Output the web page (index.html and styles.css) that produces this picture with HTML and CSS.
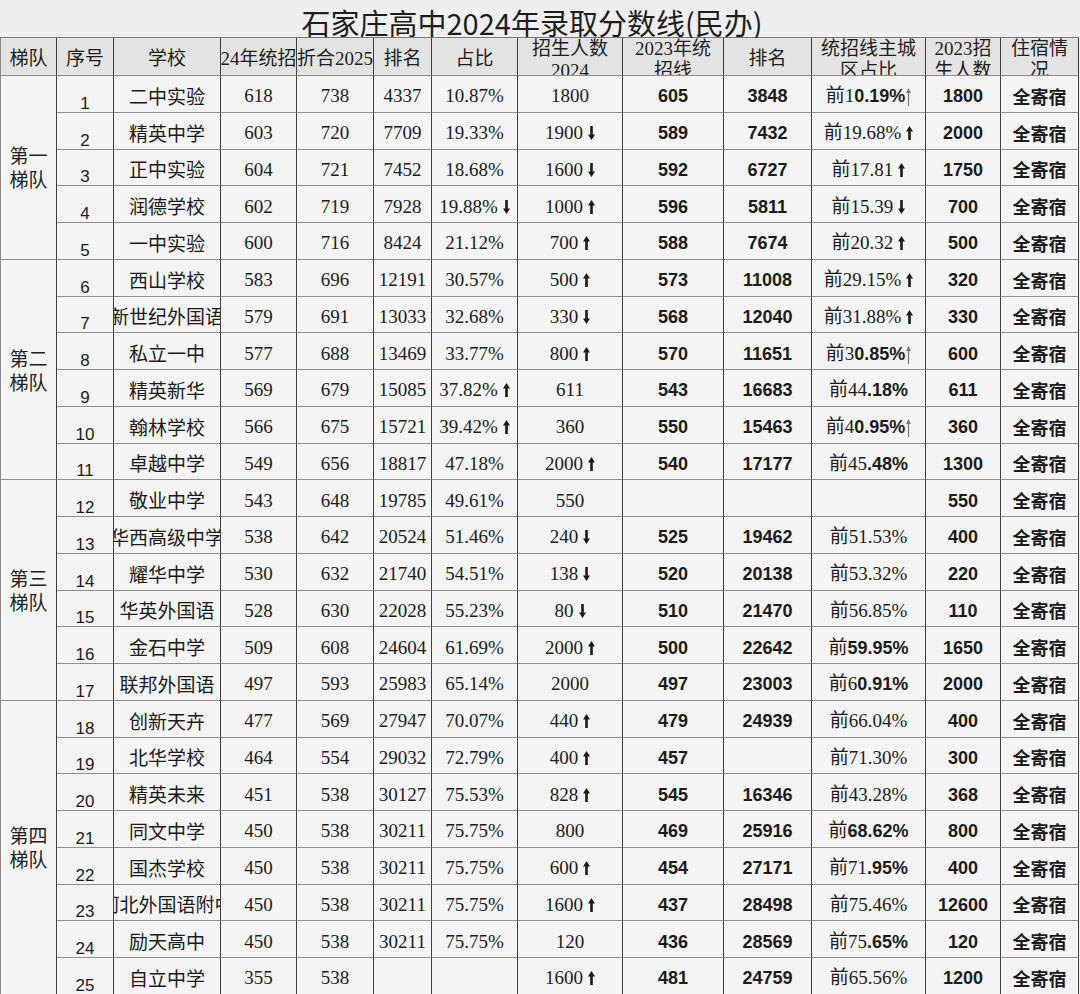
FILE: index.html
```html
<!DOCTYPE html>
<html lang="zh-CN">
<head>
<meta charset="utf-8">
<title>石家庄高中2024年录取分数线(民办)</title>
<link rel="stylesheet" href="styles.css">
</head>
<body>
<svg class="defs" aria-hidden="true">
  <symbol id="up" viewBox="0 0 7 14"><path d="M3.5 0L7 5.5H4.8V14H2.2V5.5H0Z"/></symbol>
  <symbol id="dn" viewBox="0 0 7 14"><path d="M3.5 14L7 8.5H4.8V0H2.2V8.5H0Z"/></symbol>
  <symbol id="ut" viewBox="0 0 5 18"><path d="M2.5 0L5 5H3.1V18H1.9V5H0Z"/></symbol>
</svg>
<div class="sheet">
  <div class="title">石家庄高中2024年录取分数线(民办)</div>
  <div class="grid">
    <div class="h">梯队</div>
    <div class="h">序号</div>
    <div class="h">学校</div>
    <div class="h">24年统招</div>
    <div class="h">折合2025</div>
    <div class="h">排名</div>
    <div class="h">占比</div>
    <div class="h h2"><span>招生人数<br>2024</span></div>
    <div class="h h2"><span>2023年统<br>招线</span></div>
    <div class="h">排名</div>
    <div class="h h2"><span>统招线主城<br>区占比</span></div>
    <div class="h h2"><span>2023招<br>生人数</span></div>
    <div class="h h2"><span>住宿情<br>况</span></div>

    <div class="tier t5"><span>第一<br>梯队</span></div>
    <div class="c no">1</div><div class="c sc">二中实验</div><div class="c sf">618</div><div class="c sf">738</div><div class="c sf">4337</div><div class="c sf">10.87%</div><div class="c sf">1800</div><div class="c bd">605</div><div class="c bd">3848</div><div class="c sf"><span>前1<b>0.19%</b><svg class="at"><use href="#ut"/></svg></span></div><div class="c bd">1800</div><div class="c st">全寄宿</div>
    <div class="c no">2</div><div class="c sc">精英中学</div><div class="c sf">603</div><div class="c sf">720</div><div class="c sf">7709</div><div class="c sf">19.33%</div><div class="c sf"><span>1900<svg class="ar"><use href="#dn"/></svg></span></div><div class="c bd">589</div><div class="c bd">7432</div><div class="c sf"><span>前19.68%<svg class="ar"><use href="#up"/></svg></span></div><div class="c bd">2000</div><div class="c st">全寄宿</div>
    <div class="c no">3</div><div class="c sc">正中实验</div><div class="c sf">604</div><div class="c sf">721</div><div class="c sf">7452</div><div class="c sf">18.68%</div><div class="c sf"><span>1600<svg class="ar"><use href="#dn"/></svg></span></div><div class="c bd">592</div><div class="c bd">6727</div><div class="c sf"><span>前17.81<svg class="ar"><use href="#up"/></svg></span></div><div class="c bd">1750</div><div class="c st">全寄宿</div>
    <div class="c no">4</div><div class="c sc">润德学校</div><div class="c sf">602</div><div class="c sf">719</div><div class="c sf">7928</div><div class="c sf"><span>19.88%<svg class="ar"><use href="#dn"/></svg></span></div><div class="c sf"><span>1000<svg class="ar"><use href="#up"/></svg></span></div><div class="c bd">596</div><div class="c bd">5811</div><div class="c sf"><span>前15.39<svg class="ar"><use href="#dn"/></svg></span></div><div class="c bd">700</div><div class="c st">全寄宿</div>
    <div class="c no">5</div><div class="c sc">一中实验</div><div class="c sf">600</div><div class="c sf">716</div><div class="c sf">8424</div><div class="c sf">21.12%</div><div class="c sf"><span>700<svg class="ar"><use href="#up"/></svg></span></div><div class="c bd">588</div><div class="c bd">7674</div><div class="c sf"><span>前20.32<svg class="ar"><use href="#up"/></svg></span></div><div class="c bd">500</div><div class="c st">全寄宿</div>

    <div class="tier t6"><span>第二<br>梯队</span></div>
    <div class="c no">6</div><div class="c sc">西山学校</div><div class="c sf">583</div><div class="c sf">696</div><div class="c sf">12191</div><div class="c sf">30.57%</div><div class="c sf"><span>500<svg class="ar"><use href="#up"/></svg></span></div><div class="c bd">573</div><div class="c bd">11008</div><div class="c sf"><span>前29.15%<svg class="ar"><use href="#up"/></svg></span></div><div class="c bd">320</div><div class="c st">全寄宿</div>
    <div class="c no">7</div><div class="c sc">新世纪外国语</div><div class="c sf">579</div><div class="c sf">691</div><div class="c sf">13033</div><div class="c sf">32.68%</div><div class="c sf"><span>330<svg class="ar"><use href="#dn"/></svg></span></div><div class="c bd">568</div><div class="c bd">12040</div><div class="c sf"><span>前31.88%<svg class="ar"><use href="#up"/></svg></span></div><div class="c bd">330</div><div class="c st">全寄宿</div>
    <div class="c no">8</div><div class="c sc">私立一中</div><div class="c sf">577</div><div class="c sf">688</div><div class="c sf">13469</div><div class="c sf">33.77%</div><div class="c sf"><span>800<svg class="ar"><use href="#up"/></svg></span></div><div class="c bd">570</div><div class="c bd">11651</div><div class="c sf"><span>前3<b>0.85%</b><svg class="at"><use href="#ut"/></svg></span></div><div class="c bd">600</div><div class="c st">全寄宿</div>
    <div class="c no">9</div><div class="c sc">精英新华</div><div class="c sf">569</div><div class="c sf">679</div><div class="c sf">15085</div><div class="c sf"><span>37.82%<svg class="ar"><use href="#up"/></svg></span></div><div class="c sf">611</div><div class="c bd">543</div><div class="c bd">16683</div><div class="c sf"><span>前44<b>.18%</b></span></div><div class="c bd">611</div><div class="c st">全寄宿</div>
    <div class="c no">10</div><div class="c sc">翰林学校</div><div class="c sf">566</div><div class="c sf">675</div><div class="c sf">15721</div><div class="c sf"><span>39.42%<svg class="ar"><use href="#up"/></svg></span></div><div class="c sf">360</div><div class="c bd">550</div><div class="c bd">15463</div><div class="c sf"><span>前4<b>0.95%</b><svg class="at"><use href="#ut"/></svg></span></div><div class="c bd">360</div><div class="c st">全寄宿</div>
    <div class="c no">11</div><div class="c sc">卓越中学</div><div class="c sf">549</div><div class="c sf">656</div><div class="c sf">18817</div><div class="c sf">47.18%</div><div class="c sf"><span>2000<svg class="ar"><use href="#up"/></svg></span></div><div class="c bd">540</div><div class="c bd">17177</div><div class="c sf"><span>前45<b>.48%</b></span></div><div class="c bd">1300</div><div class="c st">全寄宿</div>

    <div class="tier t6"><span>第三<br>梯队</span></div>
    <div class="c no">12</div><div class="c sc">敬业中学</div><div class="c sf">543</div><div class="c sf">648</div><div class="c sf">19785</div><div class="c sf">49.61%</div><div class="c sf">550</div><div class="c bd"></div><div class="c bd"></div><div class="c sf"></div><div class="c bd">550</div><div class="c st">全寄宿</div>
    <div class="c no">13</div><div class="c sc">华西高级中学</div><div class="c sf">538</div><div class="c sf">642</div><div class="c sf">20524</div><div class="c sf">51.46%</div><div class="c sf"><span>240<svg class="ar"><use href="#dn"/></svg></span></div><div class="c bd">525</div><div class="c bd">19462</div><div class="c sf">前51.53%</div><div class="c bd">400</div><div class="c st">全寄宿</div>
    <div class="c no">14</div><div class="c sc">耀华中学</div><div class="c sf">530</div><div class="c sf">632</div><div class="c sf">21740</div><div class="c sf">54.51%</div><div class="c sf"><span>138<svg class="ar"><use href="#dn"/></svg></span></div><div class="c bd">520</div><div class="c bd">20138</div><div class="c sf">前53.32%</div><div class="c bd">220</div><div class="c st">全寄宿</div>
    <div class="c no">15</div><div class="c sc">华英外国语</div><div class="c sf">528</div><div class="c sf">630</div><div class="c sf">22028</div><div class="c sf">55.23%</div><div class="c sf"><span>80<svg class="ar"><use href="#dn"/></svg></span></div><div class="c bd">510</div><div class="c bd">21470</div><div class="c sf">前56.85%</div><div class="c bd">110</div><div class="c st">全寄宿</div>
    <div class="c no">16</div><div class="c sc">金石中学</div><div class="c sf">509</div><div class="c sf">608</div><div class="c sf">24604</div><div class="c sf">61.69%</div><div class="c sf"><span>2000<svg class="ar"><use href="#up"/></svg></span></div><div class="c bd">500</div><div class="c bd">22642</div><div class="c sf"><span>前<b>59.95%</b></span></div><div class="c bd">1650</div><div class="c st">全寄宿</div>
    <div class="c no">17</div><div class="c sc">联邦外国语</div><div class="c sf">497</div><div class="c sf">593</div><div class="c sf">25983</div><div class="c sf">65.14%</div><div class="c sf">2000</div><div class="c bd">497</div><div class="c bd">23003</div><div class="c sf"><span>前6<b>0.91%</b></span></div><div class="c bd">2000</div><div class="c st">全寄宿</div>

    <div class="tier t8"><span>第四<br>梯队</span></div>
    <div class="c no">18</div><div class="c sc">创新天卉</div><div class="c sf">477</div><div class="c sf">569</div><div class="c sf">27947</div><div class="c sf">70.07%</div><div class="c sf"><span>440<svg class="ar"><use href="#up"/></svg></span></div><div class="c bd">479</div><div class="c bd">24939</div><div class="c sf">前66.04%</div><div class="c bd">400</div><div class="c st">全寄宿</div>
    <div class="c no">19</div><div class="c sc">北华学校</div><div class="c sf">464</div><div class="c sf">554</div><div class="c sf">29032</div><div class="c sf">72.79%</div><div class="c sf"><span>400<svg class="ar"><use href="#up"/></svg></span></div><div class="c bd">457</div><div class="c bd"></div><div class="c sf">前71.30%</div><div class="c bd">300</div><div class="c st">全寄宿</div>
    <div class="c no">20</div><div class="c sc">精英未来</div><div class="c sf">451</div><div class="c sf">538</div><div class="c sf">30127</div><div class="c sf">75.53%</div><div class="c sf"><span>828<svg class="ar"><use href="#up"/></svg></span></div><div class="c bd">545</div><div class="c bd">16346</div><div class="c sf">前43.28%</div><div class="c bd">368</div><div class="c st">全寄宿</div>
    <div class="c no">21</div><div class="c sc">同文中学</div><div class="c sf">450</div><div class="c sf">538</div><div class="c sf">30211</div><div class="c sf">75.75%</div><div class="c sf">800</div><div class="c bd">469</div><div class="c bd">25916</div><div class="c sf"><span>前<b>68.62%</b></span></div><div class="c bd">800</div><div class="c st">全寄宿</div>
    <div class="c no">22</div><div class="c sc">国杰学校</div><div class="c sf">450</div><div class="c sf">538</div><div class="c sf">30211</div><div class="c sf">75.75%</div><div class="c sf"><span>600<svg class="ar"><use href="#up"/></svg></span></div><div class="c bd">454</div><div class="c bd">27171</div><div class="c sf"><span>前71<b>.95%</b></span></div><div class="c bd">400</div><div class="c st">全寄宿</div>
    <div class="c no">23</div><div class="c sc">河北外国语附中</div><div class="c sf">450</div><div class="c sf">538</div><div class="c sf">30211</div><div class="c sf">75.75%</div><div class="c sf"><span>1600<svg class="ar"><use href="#up"/></svg></span></div><div class="c bd">437</div><div class="c bd">28498</div><div class="c sf">前75.46%</div><div class="c bd">12600</div><div class="c st">全寄宿</div>
    <div class="c no">24</div><div class="c sc">励天高中</div><div class="c sf">450</div><div class="c sf">538</div><div class="c sf">30211</div><div class="c sf">75.75%</div><div class="c sf">120</div><div class="c bd">436</div><div class="c bd">28569</div><div class="c sf"><span>前75<b>.65%</b></span></div><div class="c bd">120</div><div class="c st">全寄宿</div>
    <div class="c no">25</div><div class="c sc">自立中学</div><div class="c sf">355</div><div class="c sf">538</div><div class="c sf"></div><div class="c sf"></div><div class="c sf"><span>1600<svg class="ar"><use href="#up"/></svg></span></div><div class="c bd">481</div><div class="c bd">24759</div><div class="c sf">前65.56%</div><div class="c bd">1200</div><div class="c st">全寄宿</div>
  </div>
</div>
</body>
</html>
```

FILE: styles.css
```css
* { box-sizing: border-box; }

html, body {
  margin: 0;
  padding: 0;
}

body {
  width: 1080px;
  height: 994px;
  overflow: hidden;
  background: #efefef;
  color: #1b1b1b;
}

.defs {
  position: absolute;
  width: 0;
  height: 0;
  overflow: hidden;
}

.title {
  height: 37px;
  padding: 7px 16px 0 0;
  text-align: center;
  font-family: "Noto Sans CJK SC", sans-serif;
  font-size: 29px;
  line-height: 30px;
  color: #1e1e1e;
  white-space: nowrap;
}

.grid {
  display: grid;
  width: 1079px;
  grid-template-columns: 56px 57px 107px 76px 77px 58px 86px 105px 101px 88px 114px 75px 78px;
  grid-template-rows: 38px repeat(25, 36.75px);
  border-top: 1px solid #7a7a7a;
  border-left: 1px solid #8a8a8a;
}

.h, .c, .tier {
  display: flex;
  justify-content: center;
  align-items: center;
  min-width: 0;
  white-space: nowrap;
  border-right: 1px solid #3e3e3e;
  border-bottom: 1px solid #8e8e8e;
  background: #f4f4f4;
}

.c { overflow: hidden; }

/* header */
.h {
  background: #e3e3e3;
  font-family: "Liberation Serif", "Noto Sans CJK SC", serif;
  font-size: 19px;
  line-height: 22px;
  padding-top: 4px;
  color: #1e1e1e;
}

.h2 {
  align-items: flex-start;
  padding-top: 0;
  overflow: hidden;
  white-space: normal;
  text-align: center;
}

/* tier group */
.tier {
  font-family: "Noto Sans CJK SC", sans-serif;
  font-size: 19px;
  line-height: 24px;
  text-align: center;
  color: #222;
}

.t5 { grid-row: span 5; }
.t6 { grid-row: span 6; }
.t8 { grid-row: span 8; }

/* serial number */
.no {
  align-items: flex-end;
  font-family: "Liberation Sans", sans-serif;
  font-size: 17px;
  line-height: 17px;
}

/* school name */
.sc {
  font-family: "Noto Sans CJK SC", sans-serif;
  font-size: 19px;
  line-height: 22px;
  padding-top: 4px;
}

/* serif numbers (with CJK fallback) */
.sf {
  font-family: "Liberation Serif", "Noto Sans CJK SC", serif;
  font-size: 19px;
  line-height: 22px;
  padding-top: 5px;
}

.sf b {
  font-family: "Liberation Sans", sans-serif;
  font-weight: bold;
  font-size: 18px;
}

/* bold sans numbers */
.bd {
  font-family: "Liberation Sans", sans-serif;
  font-weight: bold;
  font-size: 18px;
  line-height: 22px;
  padding-top: 5px;
}

/* boarding */
.st {
  font-family: "Noto Sans CJK SC", sans-serif;
  font-weight: bold;
  font-size: 18px;
  line-height: 22px;
  padding-top: 4px;
}

/* arrows */
.ar {
  width: 7px;
  height: 14px;
  margin-left: 5px;
  vertical-align: -1px;
  fill: #1a1a1a;
}

.at {
  width: 5px;
  height: 18px;
  margin-left: 1px;
  vertical-align: -4px;
  fill: #777;
}
```
